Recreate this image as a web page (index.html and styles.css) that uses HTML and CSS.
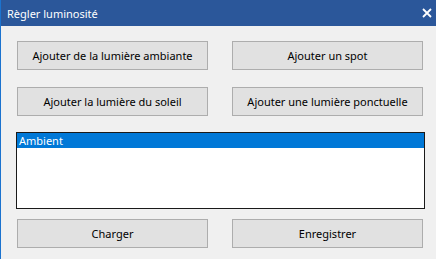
FILE: index.html
```html
<!DOCTYPE html>
<html lang="fr">
<head>
  <meta charset="UTF-8">
  <title>Règler luminosité</title>
  <link rel="stylesheet" href="styles.css">
</head>
<body>
  <div class="window">
    <div class="titlebar">
      <span class="title">Règler luminosité</span>
      <span class="close">
        <svg width="10" height="10" viewBox="0 0 10 10"><path d="M1 1L9 9M9 1L1 9" stroke="#fff" stroke-width="1.8"/></svg>
      </span>
    </div>
    <div class="content">
      <div class="grid">
        <button class="btn">Ajouter de la lumière ambiante</button>
        <button class="btn">Ajouter un spot</button>
        <button class="btn">Ajouter la lumière du soleil</button>
        <button class="btn">Ajouter une lumière ponctuelle</button>
      </div>
      <ul class="listbox">
        <li class="selected">Ambient</li>
      </ul>
      <div class="grid bottom">
        <button class="btn">Charger</button>
        <button class="btn">Enregistrer</button>
      </div>
    </div>
  </div>
</body>
</html>
```

FILE: styles.css
```css
html, body {
  margin: 0;
  padding: 0;
}
body {
  font-family: "Noto Sans", sans-serif;
  font-size: 11px;
  color: #000;
  background: #f0f0f0;
}
.window {
  width: 436px;
  height: 259px;
  box-sizing: border-box;
  border-left: 1px solid #1b73cf;
  background: #f0f0f0;
}
.titlebar {
  height: 26px;
  background: #2b579a;
  color: #fff;
  display: flex;
  align-items: center;
  justify-content: space-between;
  padding: 0 4px 0 6px;
}
.title {
  font-size: 11px;
}
.close {
  display: flex;
  width: 10px;
  height: 10px;
}
.content {
  padding: 15px 12px 0 15px;
}
.grid {
  display: grid;
  grid-template-columns: 192px 192px;
  column-gap: 23px;
  row-gap: 17px;
}
.btn {
  height: 29px;
  margin: 0;
  padding: 0;
  background: #e1e1e1;
  border: 1px solid #adadad;
  font-family: inherit;
  font-size: 11px;
  color: #000;
  margin-left: 1px;
}
.listbox {
  list-style: none;
  margin: 16px 0 0 0;
  padding: 0;
  width: 409px;
  height: 77px;
  box-sizing: border-box;
  border: 1px solid #1a1a1a;
  background: #fff;
}
.listbox li {
  height: 15px;
  line-height: 15px;
  padding-left: 2px;
}
.selected {
  background: #0078d7;
  color: #fff;
}
.bottom {
  margin-top: 10px;
}
```
